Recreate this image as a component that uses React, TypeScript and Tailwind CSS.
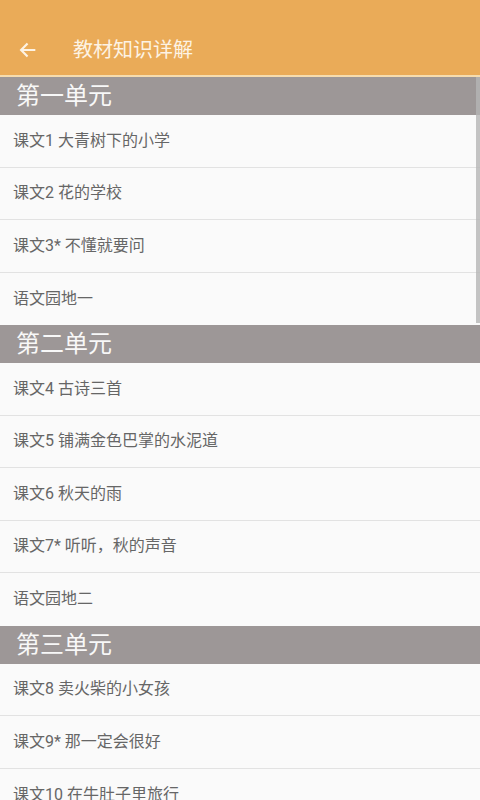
import React from "react";

const sections = [
  {
    title: "第一单元",
    items: ["课文1 大青树下的小学", "课文2 花的学校", "课文3* 不懂就要问", "语文园地一"],
  },
  {
    title: "第二单元",
    items: ["课文4 古诗三首", "课文5 铺满金色巴掌的水泥道", "课文6 秋天的雨", "课文7* 听听，秋的声音", "语文园地二"],
  },
  {
    title: "第三单元",
    items: ["课文8 卖火柴的小女孩", "课文9* 那一定会很好", "课文10 在牛肚子里旅行"],
  },
];

const App = () => {
  return (
    <div
      className="w-[480px] h-[800px] overflow-hidden bg-[#fafafa]"
      style={{ fontFamily: '"Roboto", "Noto Sans CJK SC", sans-serif' }}
    >
      <div className="h-[77px] bg-[#eaab58] flex items-center pt-[24px] border-b-2 border-[#f6dcae]">
        <div className="w-[73px] flex justify-center pr-[18px]">
          <svg width="22" height="22" viewBox="0 0 24 24" fill="none" stroke="#fdf3e4" strokeWidth="2.4">
            <path d="M20 12H5M11.5 5l-7 7 7 7" />
          </svg>
        </div>
        <h1 className="text-[20px] text-[#fdf3e4]">教材知识详解</h1>
      </div>
      <div className="relative">
        {sections.map((s) => (
          <div key={s.title}>
            <div className="h-[38px] bg-[#9d9797] flex items-center px-[16px] text-[24px] text-[#f8f8f8]">
              {s.title}
            </div>
            {s.items.map((item, i) => (
              <div
                key={item}
                className={
                  "h-[52.5px] flex items-center px-[13px] text-[16px] text-[#666666] " +
                  (i < s.items.length - 1 ? "border-b border-[#e2e2e2]" : "")
                }
              >
                {item}
              </div>
            ))}
          </div>
        ))}
        <div className="absolute right-0 top-0 w-[4px] h-[246px] bg-[#b5b5b5]/80" />
      </div>
    </div>
  );
};

export default App;
